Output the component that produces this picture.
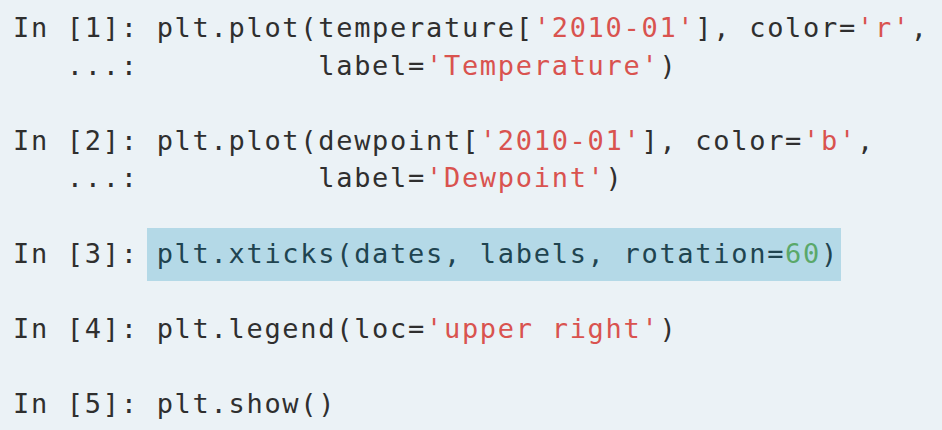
import React from "react";

type Tok = { t: string; c?: "s" | "n" };

const lines: (Tok[] | null)[] = [
  [{ t: "In [1]: plt.plot(temperature[" }, { t: "'2010-01'", c: "s" }, { t: "], color=" }, { t: "'r'", c: "s" }, { t: "," }],
  [{ t: "   ...:          label=" }, { t: "'Temperature'", c: "s" }, { t: ")" }],
  null,
  [{ t: "In [2]: plt.plot(dewpoint[" }, { t: "'2010-01'", c: "s" }, { t: "], color=" }, { t: "'b'", c: "s" }, { t: "," }],
  [{ t: "   ...:          label=" }, { t: "'Dewpoint'", c: "s" }, { t: ")" }],
  null,
  null,
  null,
  [{ t: "In [4]: plt.legend(loc=" }, { t: "'upper right'", c: "s" }, { t: ")" }],
  null,
  [{ t: "In [5]: plt.show()" }],
];

function Token({ tok }: { tok: Tok }) {
  if (tok.c === "s") return <span className="text-[#d9534f]">{tok.t}</span>;
  if (tok.c === "n") return <span className="text-[#5aa86a]">{tok.t}</span>;
  return <span>{tok.t}</span>;
}

export default function App() {
  return (
    <div className="w-[942px] h-[430px] overflow-hidden bg-[#ebf2f6] pl-[13px] pt-[9px] text-[#2f2f2f] text-[27px] leading-[37.6px] tracking-[1.7px] font-['DejaVu_Sans_Mono',monospace]">
      {lines.map((ln, i) => {
        if (i === 6) {
          return (
            <div key={i} className="whitespace-pre h-[37.6px]">
              <span>In [3]: </span>
              <span className="bg-[#b4d9e7] text-[#1f4450] -ml-[10px] pl-[10px] pr-[2px] pt-[10px] pb-[12px]">
                plt.xticks(dates, labels, rotation=<span className="text-[#5aa86a]">60</span>)
              </span>
            </div>
          );
        }
        return (
          <div key={i} className="whitespace-pre h-[37.6px]">
            {ln ? ln.map((tok, j) => <Token key={j} tok={tok} />) : null}
          </div>
        );
      })}
    </div>
  );
}
